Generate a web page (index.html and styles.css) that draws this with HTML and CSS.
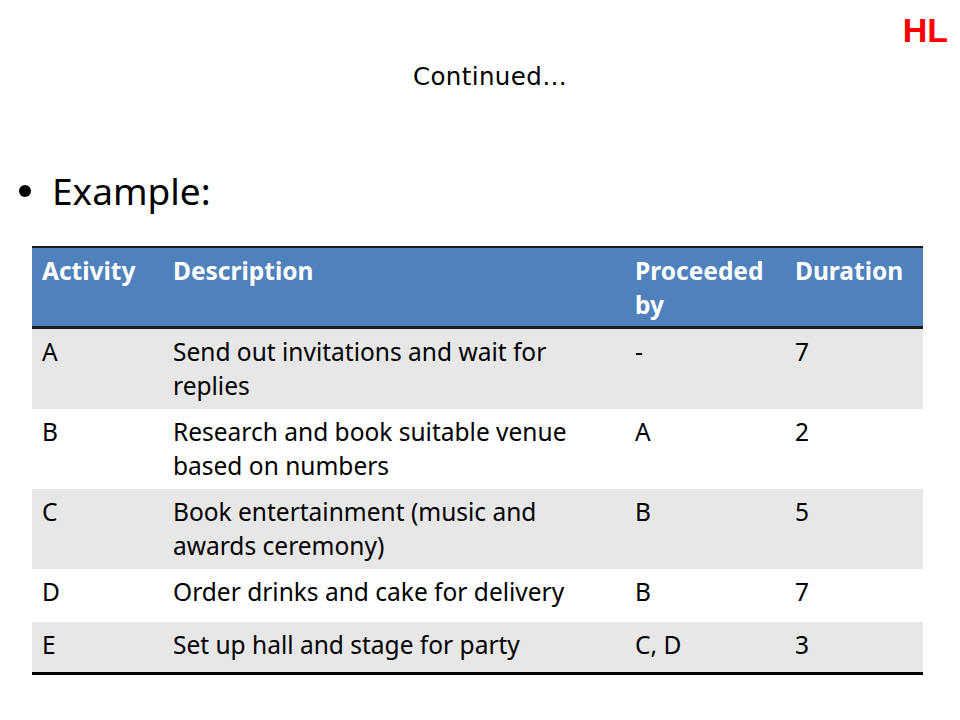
FILE: index.html
```html
<!DOCTYPE html>
<html lang="en">
<head>
<meta charset="utf-8">
<title>Continued… Example</title>
<link rel="stylesheet" href="styles.css">
</head>
<body>
<div class="slide">
  <div class="topbar"><span class="badge">HL</span></div>
  <h1 class="title">Continued…</h1>
  <div class="bullet-line"><span class="bullet"></span><span class="bullet-text">Example:</span></div>
  <table class="activities">
    <thead>
      <tr>
        <th class="c1">Activity</th>
        <th class="c2">Description</th>
        <th class="c3">Proceeded by</th>
        <th class="c4">Duration</th>
      </tr>
    </thead>
    <tbody>
      <tr class="shade">
        <td>A</td><td>Send out invitations and wait for replies</td><td>-</td><td>7</td>
      </tr>
      <tr>
        <td>B</td><td>Research and book suitable venue based on numbers</td><td>A</td><td>2</td>
      </tr>
      <tr class="shade">
        <td>C</td><td>Book entertainment (music and awards ceremony)</td><td>B</td><td>5</td>
      </tr>
      <tr class="single">
        <td>D</td><td>Order drinks and cake for delivery</td><td>B</td><td>7</td>
      </tr>
      <tr class="shade single last">
        <td>E</td><td>Set up hall and stage for party</td><td>C, D</td><td>3</td>
      </tr>
    </tbody>
  </table>
</div>
</body>
</html>
```
FILE: styles.css
```css
html, body {
  margin: 0;
  padding: 0;
  background: #ffffff;
}

.slide {
  width: 960px;
  height: 720px;
  overflow: hidden;
  background: #ffffff;
  font-family: "Noto Sans", "Open Sans", sans-serif;
  color: #000000;
}

.topbar {
  display: flex;
  justify-content: flex-end;
  padding: 13px 12px 0 0;
  height: 34px;
}

.badge {
  font-family: "Liberation Sans", Arial, sans-serif;
  font-weight: bold;
  font-size: 34px;
  line-height: 34px;
  color: #ff0000;
}

.title {
  margin: 15px 0 0 0;
  padding-left: 20px;
  text-align: center;
  font-family: "DejaVu Sans", sans-serif;
  font-weight: normal;
  font-size: 24.5px;
  line-height: 30px;
  letter-spacing: 0.4px;
}

.bullet-line {
  display: flex;
  align-items: center;
  margin-top: 77px;
  padding-left: 19px;
  height: 44px;
}

.bullet {
  width: 12px;
  height: 12px;
  border-radius: 50%;
  background: #000000;
  margin-right: 21px;
}

.bullet-text {
  font-size: 37px;
  line-height: 44px;
}

.activities {
  margin: 33px 0 0 32px;
  width: 891px;
  border-collapse: separate;
  border-spacing: 0;
  table-layout: fixed;
  font-size: 24.5px;
  line-height: 34px;
}

.activities th,
.activities td {
  text-align: left;
  vertical-align: top;
  padding: 6px 10px 6px 10px;
}

.activities th {
  background: #4f81bd;
  color: #ffffff;
  font-weight: bold;
  border-top: 2px solid #1c1c1c;
  border-bottom: 3px solid #1c1c1c;
  padding-bottom: 4px;
}

.c1 { width: 111px; }
.c2 { width: 442px; }
.c3 { width: 140px; }
.c4 { width: 118px; }

.activities tr.shade td {
  background: #e7e7e7;
}

.activities tr.single {
  height: 53px;
}

.activities tr.last td {
  border-bottom: 3px solid #000000;
}
```
